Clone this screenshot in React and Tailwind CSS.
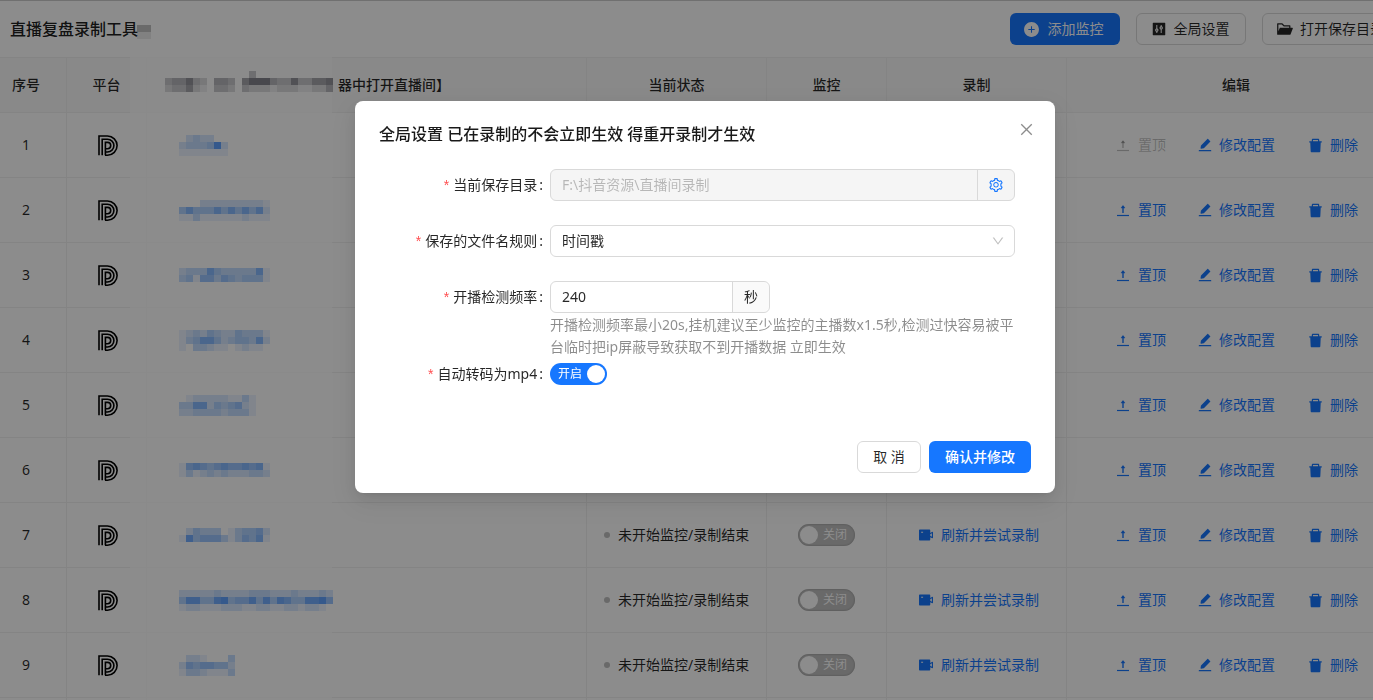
import React from 'react';
import {
  AiFillPlusCircle,
  AiFillControl,
  AiFillFolderOpen,
  AiFillEdit,
  AiFillDelete,
  AiFillVideoCamera,
  AiOutlineSetting,
  AiOutlineDown,
  AiOutlineClose,
} from 'react-icons/ai';

const UploadLineIcon = ({ className }) => (
  <svg className={className} viewBox="0 0 14 14" fill="none" stroke="currentColor">
    <path d="M1 12.5h12" strokeWidth="1.2" />
    <path d="M7 10V3" strokeWidth="1.4" />
    <path d="M5 5l2-2.6L9 5z" fill="currentColor" strokeWidth="0.4" />
  </svg>
);

const PlatformLogo = () => (
  <svg width="20" height="21" viewBox="0 0 20 21" fill="none" stroke="#000" strokeWidth="1.6">
    <path d="M1 20.2V1h8.5a9.6 9.6 0 0 1 0 19.2H7" />
    <path d="M4.2 20.2V4.2h5.3a6.4 6.4 0 0 1 0 12.8H7.2" />
    <path d="M7.4 20.2V7.4h2.1a3.2 3.2 0 0 1 0 6.4H7.4" />
  </svg>
);

// pixelated patches from the reference, every digit is one 7px block
const Mosaic = ({ rows, color = '#1677ff', strength = 0.085, className = '' }) => (
  <svg
    className={`relative z-10 shrink-0 ${className}`}
    width={rows[0].length * 7}
    height={rows.length * 7}
    viewBox={`0 0 ${rows[0].length * 7} ${rows.length * 7}`}
  >
    {rows.map((row, y) =>
      row.split('').map((v, x) => (
        <rect key={`${x}-${y}`} x={x * 7} y={y * 7} width="7" height="7" fill={color} fillOpacity={Number(v) * strength} />
      ))
    )}
  </svg>
);

const nameMosaics = [
  ['0232200', '2333482', '1111111'],
  ['0002222222221', '4644464646462', '1131111112111'],
  ['2333643333361', '3415535434441'],
  ['1232432243331', '1346642344362', '1033211012110'],
  ['01222221131', '33662434521', '22333323331'],
  ['1565456556561', '1312323222332'],
  ['0243330134452', '1745553135461'],
  ['2222232222333222322232', '4774478455747476447785', '1221112221122112212210'],
  ['022100030', '254554420', '133211130'],
];

const Row = ({ index, name, disabledTop }) => (
  <div className="flex h-[65px] items-center border-b border-[#f0f0f0] text-sm text-black/85">
    <div className="flex h-full w-[67px] shrink-0 items-center justify-center border-r border-[#f0f0f0] pr-[14px]">{index}</div>
    <div className="flex h-full w-[80px] shrink-0 items-center justify-center border-r border-[#f0f0f0] pl-[2px]">
      <PlatformLogo />
    </div>
    <div className="flex h-full w-[440px] shrink-0 items-center border-r border-[#f0f0f0] pl-[32px]">
      {name && <Mosaic rows={name} />}
    </div>
    <div className="flex h-full w-[180px] shrink-0 items-center gap-[8px] border-r border-[#f0f0f0] pl-[17px]">
      <span className="h-[6px] w-[6px] rounded-full bg-black/25" />
      <span>未开始监控/录制结束</span>
    </div>
    <div className="flex h-full w-[120px] shrink-0 items-center justify-center border-r border-[#f0f0f0]">
      <div className="flex h-[22px] w-[57px] items-center rounded-full bg-black/25 pl-[2px] shadow-[inset_0_0_2px_rgba(0,0,0,0.3)]">
        <span className="h-[18px] w-[18px] rounded-full bg-white" />
        <span className="ml-[5px] text-xs text-white">关闭</span>
      </div>
    </div>
    <div className="flex h-full w-[180px] shrink-0 items-center gap-[7px] border-r border-[#f0f0f0] pl-[31px] text-[#1677ff]">
      <AiFillVideoCamera className="text-[16px]" />
      <span>刷新并尝试录制</span>
    </div>
    <div className="flex h-full flex-1 items-center justify-end pr-[15px] text-[#1677ff]">
      <div className={`mr-[31px] flex items-center gap-[8px] ${disabledTop ? 'text-black/25' : ''}`}>
        <UploadLineIcon className="h-[14px] w-[14px]" />
        <span>置顶</span>
      </div>
      <div className="mr-[32px] flex items-center gap-[6px]">
        <AiFillEdit className="text-[16px]" />
        <span>修改配置</span>
      </div>
      <div className="flex items-center gap-[6px]">
        <AiFillDelete className="text-[17px]" />
        <span>删除</span>
      </div>
    </div>
  </div>
);

const HeadCell = ({ className, children }) => (
  <div className={`flex h-full shrink-0 items-center justify-center border-r border-[#f0f0f0] ${className}`}>{children}</div>
);

const Page = () => (
  <div className="relative h-screen overflow-hidden bg-white">
    <div className="flex h-[58px] items-center overflow-hidden border-y border-t-black/20 border-b-[#f0f0f0]">
      <div className="flex w-[1010px] shrink-0 items-center pl-[10px] text-base font-medium text-black/90">
        直播复盘录制工具
        <Mosaic className="-ml-[8px] mt-[6px]" rows={['033', '011']} color="#000" strength={0.08} />
      </div>
      <button className="flex h-[32px] w-[110px] shrink-0 items-center justify-center gap-[8px] rounded-md bg-[#1677ff] pr-[4px] text-sm text-white">
        <AiFillPlusCircle className="text-[17px]" />
        添加监控
      </button>
      <button className="ml-[16px] flex h-[32px] w-[110px] shrink-0 items-center justify-center gap-[7px] rounded-md border border-[#d9d9d9] pr-[2px] text-sm text-black/85">
        <AiFillControl className="text-[16px]" />
        全局设置
      </button>
      <button className="ml-[16px] flex h-[32px] w-[138px] shrink-0 items-center justify-center gap-[6px] rounded-md border border-[#d9d9d9] pr-[2px] text-sm text-black/85">
        <AiFillFolderOpen className="text-[18px]" />
        打开保存目录
      </button>
    </div>

    <div className="flex h-[55px] items-center border-b border-[#f0f0f0] bg-[#fafafa] text-sm font-medium text-black/85">
      <HeadCell className="w-[67px] pr-[14px]">序号</HeadCell>
      <HeadCell className="w-[80px]">平台</HeadCell>
      <HeadCell className="w-[440px] !justify-start pl-[18px]">
        <div className="flex items-center">
          <Mosaic
            className="-mt-[7px]"
            color="#223"
            strength={0.08}
            rows={[
              '000000000000300000000000',
              '344632044305777433633556',
              '233521033203222122211224',
            ]}
          />
          <span className="ml-[5px]">器中打开直播间】</span>
        </div>
      </HeadCell>
      <HeadCell className="w-[180px]">当前状态</HeadCell>
      <HeadCell className="w-[120px]">监控</HeadCell>
      <HeadCell className="w-[180px]">录制</HeadCell>
      <div className="flex h-full flex-1 items-center justify-center pl-[32px]">编辑</div>
    </div>

    {nameMosaics.map((name, i) => (
      <Row key={i} index={i + 1} name={name} disabledTop={i === 0} />
    ))}
    <Row index={10} />

    {/* washed out strip left over from the blur in the screenshot */}
    <div className="absolute bottom-0 left-[130px] top-[57px] w-[202px] bg-white/70" />
  </div>
);

const FieldLabel = ({ children }) => (
  <label className="flex h-[32px] items-center justify-end pr-[7px] text-sm text-black/85">
    <span className="mr-[4px] font-['Liberation_Sans',sans-serif] text-sm text-[#ff4d4f]">*</span>
    {children}
    <span className="ml-[2px]">:</span>
  </label>
);

const SettingsModal = () => (
  <div className="fixed inset-0 z-20 flex items-start bg-black/45 pl-[355px]">
    <div className="relative mt-[101px] h-[392px] w-[700px] rounded-lg bg-white px-[24px] py-[20px] shadow-[0_6px_16px_0_rgba(0,0,0,0.08),0_3px_6px_-4px_rgba(0,0,0,0.12),0_9px_28px_8px_rgba(0,0,0,0.05)]">
      <AiOutlineClose className="absolute right-[20px] top-[20px] text-[17px] text-black/45" />
      <h2 className="text-base leading-[26px] font-medium text-black/90">全局设置 已在录制的不会立即生效 得重开录制才生效</h2>

      <div className="mt-[22px] grid grid-cols-[171px_465px] gap-y-[24px]">
        <FieldLabel>当前保存目录</FieldLabel>
        <div className="flex h-[32px] items-center rounded-md border border-[#d9d9d9] bg-black/[0.04] text-sm">
          <span className="flex-1 pl-[11px] text-black/25">F:\抖音资源\直播间录制</span>
          <span className="flex h-full w-[37px] items-center justify-center border-l border-[#d9d9d9] text-[#1677ff]">
            <AiOutlineSetting className="text-[16px]" />
          </span>
        </div>

        <FieldLabel>保存的文件名规则</FieldLabel>
        <div className="flex h-[32px] items-center justify-between rounded-md border border-[#d9d9d9] pl-[11px] pr-[9px] text-sm text-black/85">
          <span>时间戳</span>
          <AiOutlineDown className="text-[14px] text-black/25" />
        </div>

        <FieldLabel>开播检测频率</FieldLabel>
        <div>
          <div className="flex h-[32px] w-[220px] items-center rounded-md border border-[#d9d9d9] text-sm text-black/85">
            <span className="flex-1 pl-[11px]">240</span>
            <span className="flex h-full w-[37px] items-center justify-center rounded-r-md border-l border-[#d9d9d9] bg-black/[0.02]">秒</span>
          </div>
          <p className="pt-[1px] text-sm leading-[22px] text-black/45">
            开播检测频率最小20s,挂机建议至少监控的主播数x1.5秒,检测过快容易被平台临时把ip屏蔽导致获取不到开播数据 立即生效
          </p>
        </div>
      </div>

      <div className="grid grid-cols-[171px_465px]">
        <FieldLabel>自动转码为mp4</FieldLabel>
        <div className="flex h-[32px] items-center">
          <div className="flex h-[22px] w-[57px] items-center justify-between rounded-full bg-[#1677ff] pl-[8px] pr-[2px]">
            <span className="text-xs text-white">开启</span>
            <span className="h-[18px] w-[18px] rounded-full bg-white" />
          </div>
        </div>
      </div>

      <div className="absolute bottom-[20px] right-[24px] flex gap-[8px]">
        <button className="h-[32px] w-[64px] rounded-md border border-[#d9d9d9] bg-white text-sm text-black/85">取 消</button>
        <button className="h-[32px] w-[102px] rounded-md bg-[#1677ff] text-sm font-medium text-white">确认并修改</button>
      </div>
    </div>
  </div>
);

const App = () => (
  <div className="font-['Noto_Sans','Noto_Sans_CJK_SC',sans-serif]">
    <Page />
    <SettingsModal />
  </div>
);

export default App;
